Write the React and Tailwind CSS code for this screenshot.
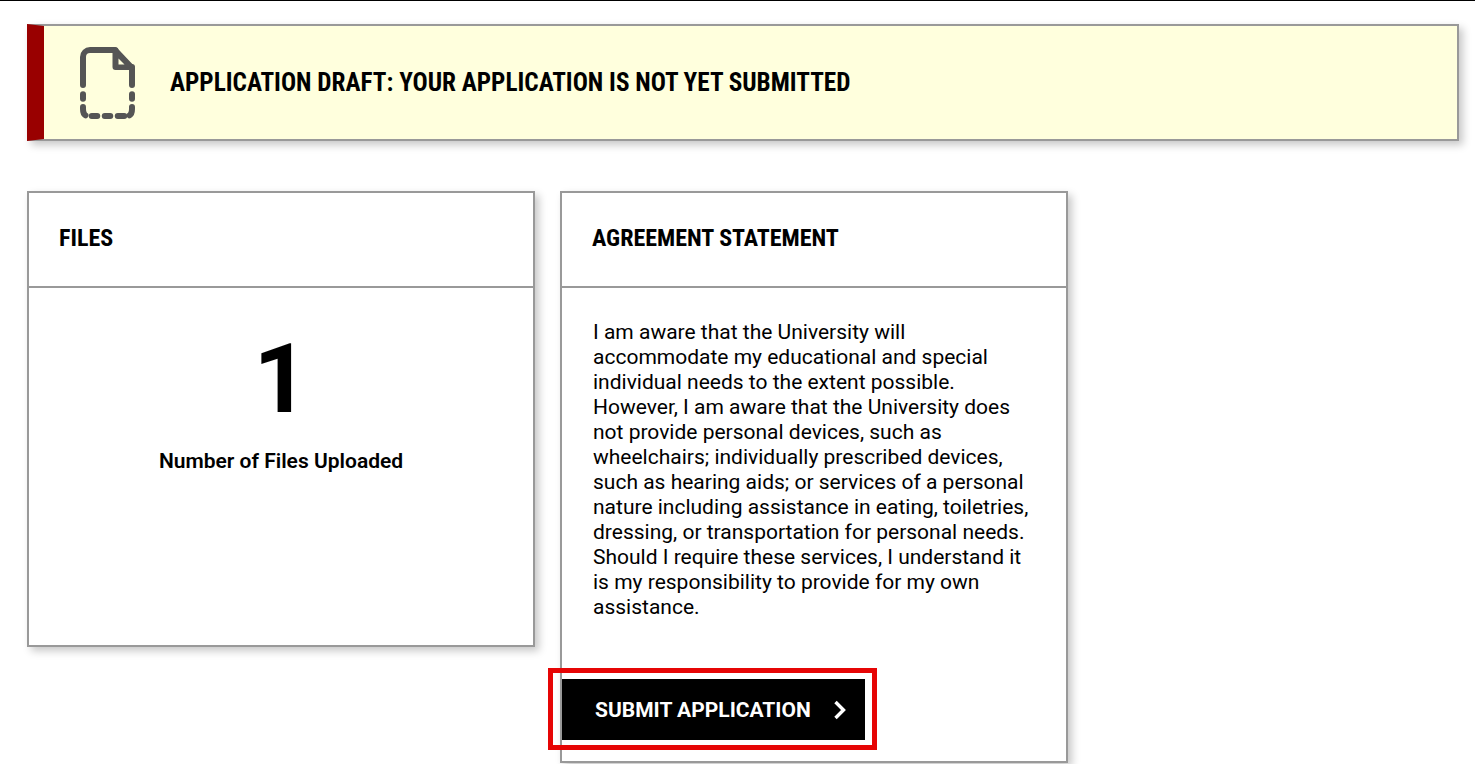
function DraftIcon() {
  return (
    <svg width="56" height="72" viewBox="0 0 56 72" fill="none" stroke="#555555" strokeWidth="6" strokeLinecap="round" className="shrink-0">
      <path d="M3 38V10a7 7 0 0 1 7-7H35L52 21V38" strokeLinejoin="round" />
      <path d="M35.5 3.25V20H52" strokeLinejoin="round" />
      <path d="M36 4l16 16.5H36z" fill="#555555" stroke="none" />
      <path d="M38.5 11.5l6 6h-6z" fill="#ffffdd" stroke="none" />
      <path d="M3 47.3v4.4M52 47.3v4.4" />
      <path d="M3 60v2q0 5 2.5 6.3M52 60v2q0 5-2.5 6.3" />
      <path d="M11.75 69h5.5M24.75 69h5.5M37.75 69h6.5" />
    </svg>
  )
}

function Card({ title, className, children }) {
  return (
    <div className={`w-[508px] border-2 border-[#999999] bg-white shadow-[4px_4px_8px_rgba(0,0,0,0.22)] ${className}`}>
      <div className="flex h-[95px] items-center border-b-2 border-[#999999] pb-[4px] pl-[30px]">
        <h2 className="font-['Roboto'] text-[24px] font-bold text-black [font-stretch:75%]">{title}</h2>
      </div>
      {children}
    </div>
  )
}

export default function App() {
  return (
    <div className="h-[764px] overflow-hidden border-t border-black bg-white font-['Roboto',sans-serif] text-black">
      <div className="px-[27px] pt-[23px]">
        <div className="flex h-[117px] w-[1432px] items-center border-2 border-l-[17px] border-[#999999] border-l-[#990000] bg-[#ffffdd] pl-[36px] shadow-[4px_4px_8px_rgba(0,0,0,0.22)]">
          <DraftIcon />
          <h1 className="ml-[34px] text-[25.2px] font-bold [font-stretch:75%]">
            APPLICATION DRAFT: YOUR APPLICATION IS NOT YET SUBMITTED
          </h1>
        </div>

        <div className="mt-[50px] flex items-start gap-[25px]">
          <Card title="FILES" className="h-[456px]">
            <div className="flex flex-col items-center pt-[35px]">
              <div className="text-[96px] leading-[112px] font-bold">1</div>
              <p className="mt-[14px] text-[21px] leading-[25px] font-semibold">Number of Files Uploaded</p>
            </div>
          </Card>

          <Card title="AGREEMENT STATEMENT" className="h-[572px]">
            <p className="pt-[32px] pr-[30px] pl-[31px] text-[21px] leading-[25px]">
              I am aware that the University will accommodate my educational and special individual needs to the extent
              possible. However, I am aware that the University does not provide personal devices, such as wheelchairs;
              individually prescribed devices, such as hearing aids; or services of a personal nature including
              assistance in eating, toiletries, dressing, or transportation for personal needs. Should I require these
              services, I understand it is my responsibility to provide for my own assistance.
            </p>
            <div className="relative mt-[59px] w-[303px]">
              <button className="flex h-[61px] w-full items-center bg-black pl-[33px] text-[21px] font-bold text-white">
                <span className="pt-[2px]">SUBMIT APPLICATION</span>
                <svg width="14" height="20" viewBox="0 0 14 20" fill="none" stroke="white" strokeWidth="3.4" className="ml-[22px] shrink-0">
                  <path d="M2.5 2l8 8-8 8" />
                </svg>
              </button>
              <div className="absolute -top-[11px] -right-[12px] -bottom-[10px] -left-[14px] border-[5px] border-[#e60505]" />
            </div>
          </Card>
        </div>
      </div>
    </div>
  )
}
